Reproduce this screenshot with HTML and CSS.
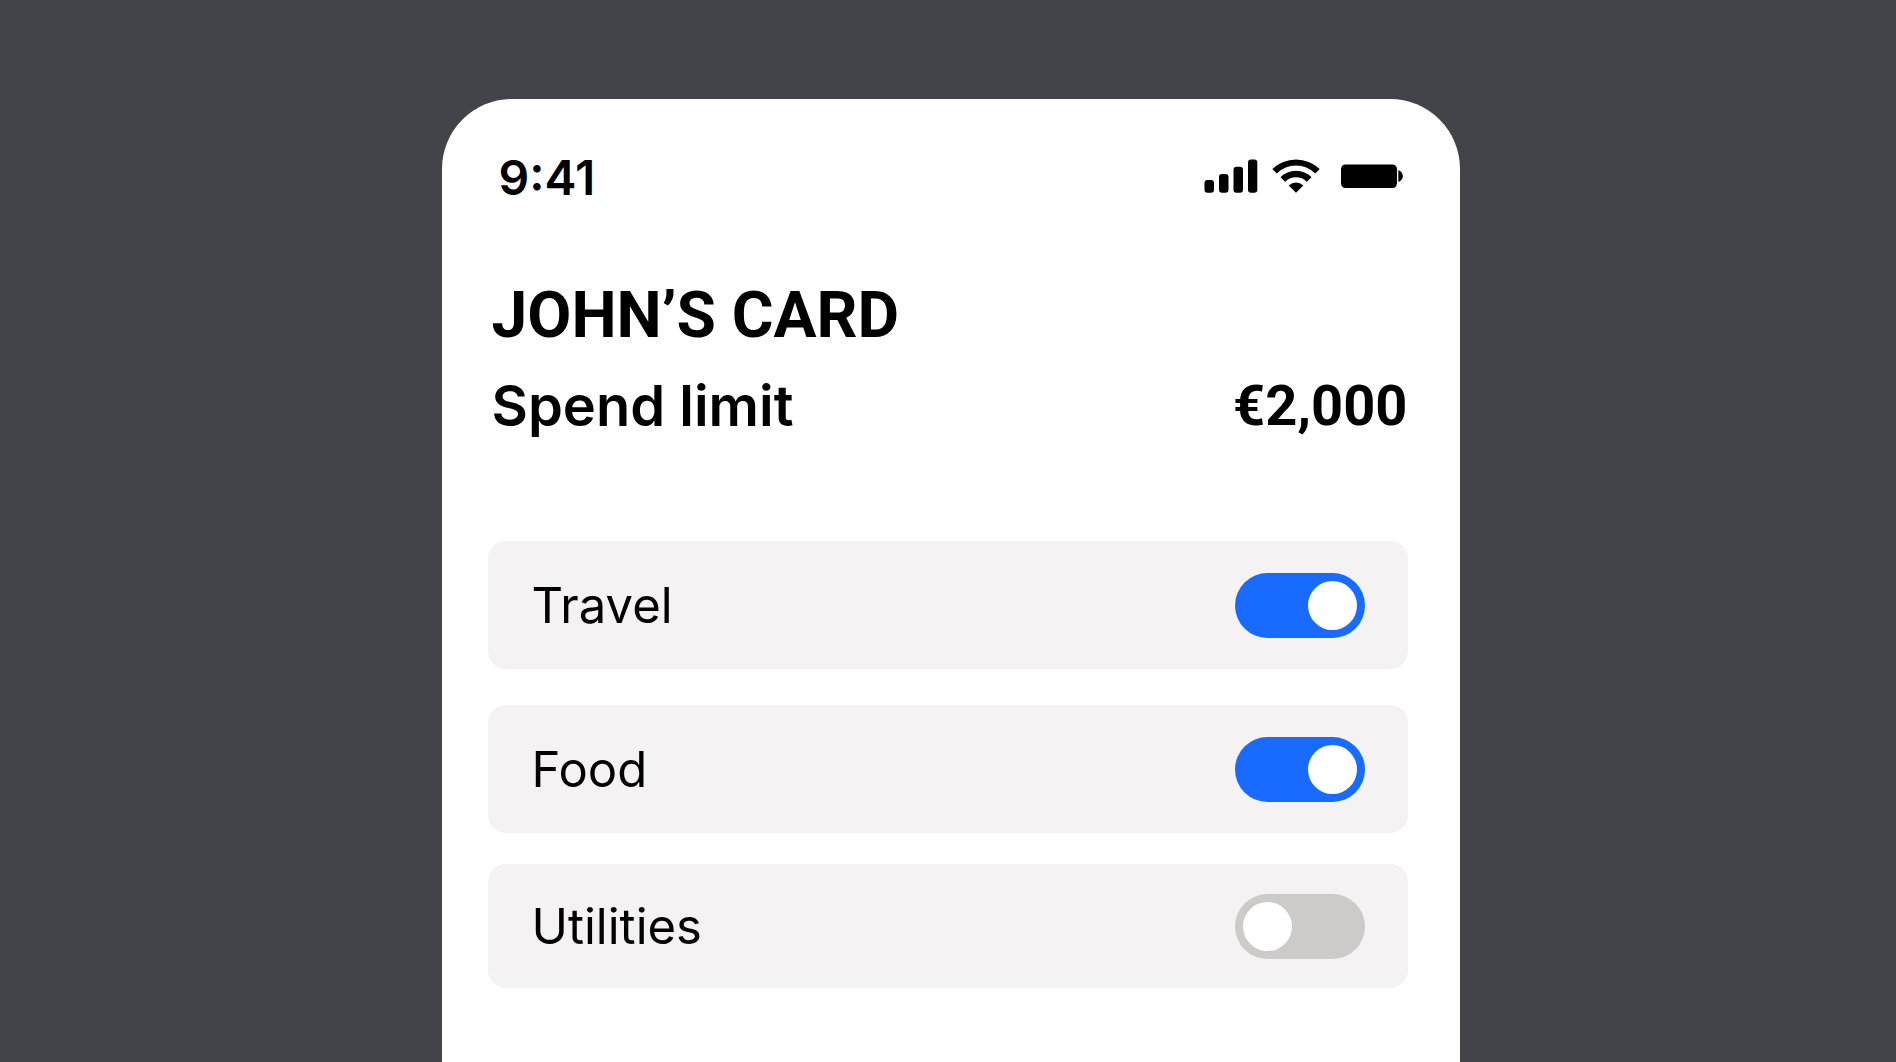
FILE: index.html
```html
<!DOCTYPE html>
<html lang="en">
<head>
<meta charset="utf-8">
<meta name="viewport" content="width=device-width, initial-scale=1">
<title>John’s card</title>
<link rel="stylesheet" href="styles.css">
</head>
<body>
<main class="phone">
  <div class="status">
    <span class="time">9:41</span>
    <svg class="status-icons" width="200" height="36" viewBox="0 0 200 36" role="img" aria-label="Signal, Wi-Fi, battery">
      <rect x="0.5" y="22" width="9.5" height="12.7" rx="3"/>
      <rect x="15" y="16" width="9.5" height="18.7" rx="3"/>
      <rect x="29.5" y="8.7" width="9.5" height="26" rx="3"/>
      <rect x="44" y="1.4" width="9.3" height="33.3" rx="3"/>
      <path d="M68.300 11a34 34 0 0 1 47.400 0l-4.500 4.500a27 27 0 0 0-38.400 0z"/>
      <path d="M76.500 19.200a22 22 0 0 1 31 0l-4.700 4.500a15.600 15.600 0 0 0-21.600 0z"/>
      <path d="M84.700 27.400a10.500 10.500 0 0 1 14.600 0l-7.300 7.300z"/>
      <rect x="137" y="6.500" width="56" height="23.500" rx="4.500"/>
      <path d="M194.300 12q4.500 2 4.500 6t-4.500 6z"/>
    </svg>
  </div>
  <header class="summary">
    <h1 class="title">JOHN’S CARD</h1>
    <p class="limit"><span class="limit-label">Spend limit</span><span>€2,000</span></p>
  </header>
  <div class="categories">
    <label class="row"><span class="row-name">Travel</span><input class="switch" type="checkbox" role="switch" checked></label>
    <label class="row"><span class="row-name">Food</span><input class="switch" type="checkbox" role="switch" checked></label>
    <label class="row row-compact"><span class="row-name">Utilities</span><input class="switch" type="checkbox" role="switch"></label>
  </div>
</main>
</body>
</html>
```
FILE: styles.css
```css
* {
  box-sizing: border-box;
}

body {
  margin: 0;
  min-height: 100vh;
  padding: 99px 0 0 5px;
  display: flex;
  justify-content: center;
  background: #434449;
  color: #000;
  font-family: Inter, "Liberation Sans", sans-serif;
}

.phone {
  width: 100%;
  max-width: 1018px;
  padding: 48px 52px 0 46px;
  border-radius: 70px 70px 0 0;
  background: #fff;
}

.status {
  display: flex;
  align-items: flex-start;
  justify-content: space-between;
  padding: 0 4px 0 11px;
}

.status-icons {
  margin-top: 11px;
}

.time {
  padding-top: 1px;
  font-size: 48px;
  line-height: 59px;
  font-weight: 600;
}

.summary {
  padding: 70px 0 0 4px;
  font-family: Roboto, "Liberation Sans", sans-serif;
  font-weight: 700;
}

.title {
  margin: 0;
  font-size: 64px;
  line-height: 78px;
}

.limit {
  display: flex;
  justify-content: space-between;
  margin: 18px 0 0;
  font-size: 56px;
  line-height: 66px;
}

.limit-label {
  font-family: Inter, "Liberation Sans", sans-serif;
  font-weight: 600;
}

.categories {
  display: grid;
  gap: 36px;
  padding-top: 102px;
}

.row {
  display: flex;
  align-items: center;
  justify-content: space-between;
  min-height: 128px;
  padding: 0 43px 0 44px;
  border-radius: 18px;
  background: #f4f2f3;
  font-size: 49px;
  line-height: 60px;
}

.row-name {
  padding-top: 2px;
}

.row-compact {
  min-height: 124px;
  margin-top: -5px;
}

.switch {
  appearance: none;
  display: flex;
  width: 130px;
  height: 65px;
  margin: 0;
  padding: 8px;
  border-radius: 33px;
  background: #cecac9;
}

.switch::before {
  content: "";
  width: 49px;
  height: 49px;
  border-radius: 50%;
  background: #fff;
}

.switch:checked {
  justify-content: flex-end;
  background: #196bff;
}
```
